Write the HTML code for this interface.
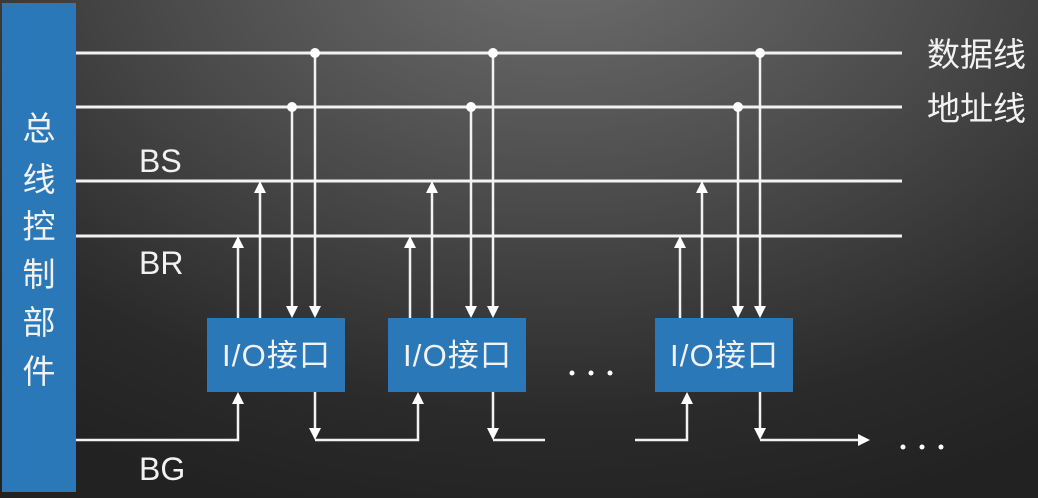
<!DOCTYPE html>
<html><head><meta charset="utf-8"><style>
body{margin:0;width:1038px;height:498px;overflow:hidden;background:radial-gradient(ellipse 900px 600px at 560px -60px,#707070 0%,#4a4a4a 45%,#2a2a2a 80%,#222 100%);font-family:"Liberation Sans","Noto Sans CJK SC",sans-serif;}
</style></head><body>
<svg width="1038" height="498" style="position:absolute;left:0;top:0">
<defs><marker id="a" markerWidth="12" markerHeight="12" refX="6" refY="6" orient="auto" markerUnits="userSpaceOnUse"><path d="M0,0 L12,6 L0,12 z" fill="#fff"/></marker></defs>
<rect x="2" y="3" width="74" height="489" fill="#2a78b8"/>
<g stroke="#f2f2f2" stroke-width="3" fill="none">
<line x1="76" y1="53" x2="902" y2="53"/><line x1="76" y1="107" x2="902" y2="107"/>
<line x1="76" y1="181" x2="902" y2="181"/><line x1="76" y1="236" x2="902" y2="236"/>
</g>
<g stroke="#f2f2f2" stroke-width="2.5" fill="none" marker-end="url(#a)">
<line x1="238" y1="318" x2="238" y2="242"/><line x1="260" y1="318" x2="260" y2="187"/>
<line x1="292" y1="107" x2="292" y2="312"/><line x1="315" y1="53" x2="315" y2="312"/>
<line x1="410" y1="318" x2="410" y2="242"/><line x1="432" y1="318" x2="432" y2="187"/>
<line x1="471" y1="107" x2="471" y2="312"/><line x1="493" y1="53" x2="493" y2="312"/>
<line x1="680" y1="318" x2="680" y2="242"/><line x1="702" y1="318" x2="702" y2="187"/>
<line x1="738" y1="107" x2="738" y2="312"/><line x1="760" y1="53" x2="760" y2="312"/>
<polyline points="76,440 238,440 238,398"/>
<line x1="315" y1="392" x2="315" y2="434"/>
<polyline points="315,440 418,440 418,398"/>
<line x1="493" y1="392" x2="493" y2="434"/>
<polyline points="635,440 687,440 687,398"/>
<line x1="760" y1="392" x2="760" y2="434"/>
<line x1="760" y1="440" x2="864" y2="440"/>
</g>
<line x1="493" y1="440" x2="545" y2="440" stroke="#f2f2f2" stroke-width="2.5"/>
<g fill="#fff"><circle cx="315" cy="53" r="5"/><circle cx="493" cy="53" r="5"/><circle cx="760" cy="53" r="5"/>
<circle cx="292" cy="107" r="5"/><circle cx="471" cy="107" r="5"/><circle cx="738" cy="107" r="5"/>
<circle cx="572" cy="373" r="2.5"/><circle cx="591" cy="373" r="2.5"/><circle cx="610" cy="373" r="2.5"/>
<circle cx="903" cy="447" r="2.5"/><circle cx="922" cy="447" r="2.5"/><circle cx="941" cy="447" r="2.5"/></g>
<g fill="#2a78b8"><rect x="207" y="318" width="138" height="74"/><rect x="388" y="318" width="138" height="74"/><rect x="655" y="318" width="138" height="74"/></g>
<g fill="#f2f2f2" font-family="Liberation Sans,Noto Sans CJK SC,sans-serif">
<text x="276" y="366" font-size="31" text-anchor="middle" textLength="108">I/O接口</text>
<text x="457" y="366" font-size="31" text-anchor="middle" textLength="108">I/O接口</text>
<text x="724" y="366" font-size="31" text-anchor="middle" textLength="108">I/O接口</text>
<text x="139" y="172" font-size="32">BS</text>
<text x="139" y="274" font-size="32">BR</text>
<text x="139" y="480" font-size="32">BG</text>
<text x="927" y="66" font-size="33">数据线</text>
<text x="927" y="120" font-size="33">地址线</text>
<g font-size="33" text-anchor="middle"><text x="39" y="140">总</text><text x="39" y="191">线</text><text x="39" y="238">控</text><text x="39" y="286">制</text><text x="39" y="334">部</text><text x="39" y="383">件</text></g>
</g>
</svg>
</body></html>
